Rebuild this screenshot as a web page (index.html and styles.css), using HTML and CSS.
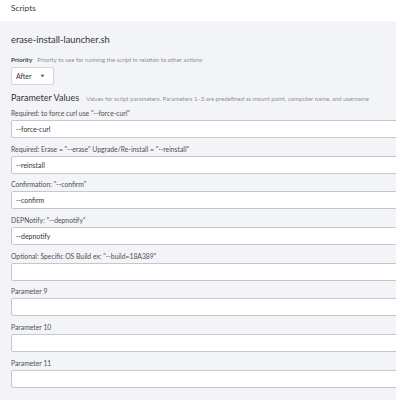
FILE: index.html
```html
<!DOCTYPE html>
<html>
    <head>
        <meta charset="UTF-8">
        <meta name="viewport" content="width=device-width, initial-scale=1"/>
        <title>Scripts</title>
        <link rel="stylesheet" href="styles.css">
    </head>
    <body>
        <div class="topbar">
            <h2>Scripts</h2>
        </div>
        <div class="panel">
            <h3 class="script_name">erase-install-launcher.sh</h3>

            <div class="field_head">
                <span class="field_title">Priority</span>
                <span class="field_desc">Priority to use for running the script in relation to other actions</span>
            </div>
            <div class="select">
                <span>After</span>
                <svg class="caret" width="5" height="4" viewBox="0 0 5 4"><path d="M0.5 0.8 L4.5 0.8 L2.5 3.3 Z" fill="#555"/></svg>
            </div>

            <div class="section_head">
                <span class="section_title">Parameter Values</span>
                <span class="field_desc">Values for script parameters. Parameters 1–3 are predefined as mount point, computer name, and username</span>
            </div>

            <div class="param">
                <label>Required: to force curl use "--force-curl"</label>
                <input type="text" value="--force-curl">
            </div>
            <div class="param">
                <label>Required: Erase = "--erase" Upgrade/Re-install = "--reinstall"</label>
                <input type="text" value="--reinstall">
            </div>
            <div class="param">
                <label>Confirmation: "--confirm"</label>
                <input type="text" value="--confirm">
            </div>
            <div class="param">
                <label>DEPNotify: "--depnotify"</label>
                <input type="text" value="--depnotify">
            </div>
            <div class="param">
                <label>Optional: Specific OS Build ex: "--build=18A389"</label>
                <input type="text" value="">
            </div>
            <div class="param">
                <label>Parameter 9</label>
                <input type="text" value="">
            </div>
            <div class="param">
                <label>Parameter 10</label>
                <input type="text" value="">
            </div>
            <div class="param">
                <label>Parameter 11</label>
                <input type="text" value="">
            </div>
        </div>
    </body>
</html>
```

FILE: styles.css
```css
html, body{
    margin: 0;
    padding: 0;
    background-color: #f3f4f8;
    overflow: hidden;
    font-family: 'Lato', 'Open Sans', sans-serif;
    color: #3b3b3b;
}
.topbar{
    background-color: white;
    height: 21px;
    padding-left: 11px;
    box-sizing: border-box;
}
.topbar h2{
    margin: 0;
    font-size: 8.4px;
    font-weight: normal;
    line-height: 16px;
    color: #3a3a3a;
}
.panel{
    padding: 12px 0 0 11px;
    width: 420px;
}
.script_name{
    margin: 0;
    font-size: 9.3px;
    font-weight: normal;
    line-height: 14px;
    color: #333;
}
.field_head{
    margin-top: 7px;
    line-height: 12px;
    display: flex;
    align-items: baseline;
    gap: 5px;
}
.field_title{
    font-size: 6.4px;
    font-weight: bold;
    color: #444;
}
.field_desc{
    font-size: 6px;
    color: #8e9097;
    white-space: nowrap;
}
.select{
    margin-top: 1px;
    width: 43px;
    height: 18px;
    box-sizing: border-box;
    background: white;
    border: 1px solid #d3d5da;
    border-radius: 2px;
    display: flex;
    align-items: center;
    justify-content: space-between;
    padding: 0 8px 0 4px;
    font-size: 7px;
    color: #333;
}
.caret{
    display: block;
}
.section_head{
    margin-top: 6px;
    line-height: 14px;
    display: flex;
    align-items: baseline;
    gap: 7px;
}
.section_title{
    font-size: 9px;
    color: #333;
}
.param{
    display: flex;
    flex-direction: column;
    margin-top: 2px;
    margin-bottom: 5.7px;
}
.param label{
    font-size: 6.8px;
    line-height: 11px;
    color: #4f4f4f;
    white-space: nowrap;
}
.param input{
    margin-top: 1px;
    height: 18px;
    width: 420px;
    box-sizing: border-box;
    border: 1px solid #c5c7cc;
    border-radius: 2px;
    background: white;
    padding: 0 4px;
    font-family: 'Lato', 'Open Sans', sans-serif;
    font-size: 6.9px;
    color: #333;
    outline: none;
}
```
